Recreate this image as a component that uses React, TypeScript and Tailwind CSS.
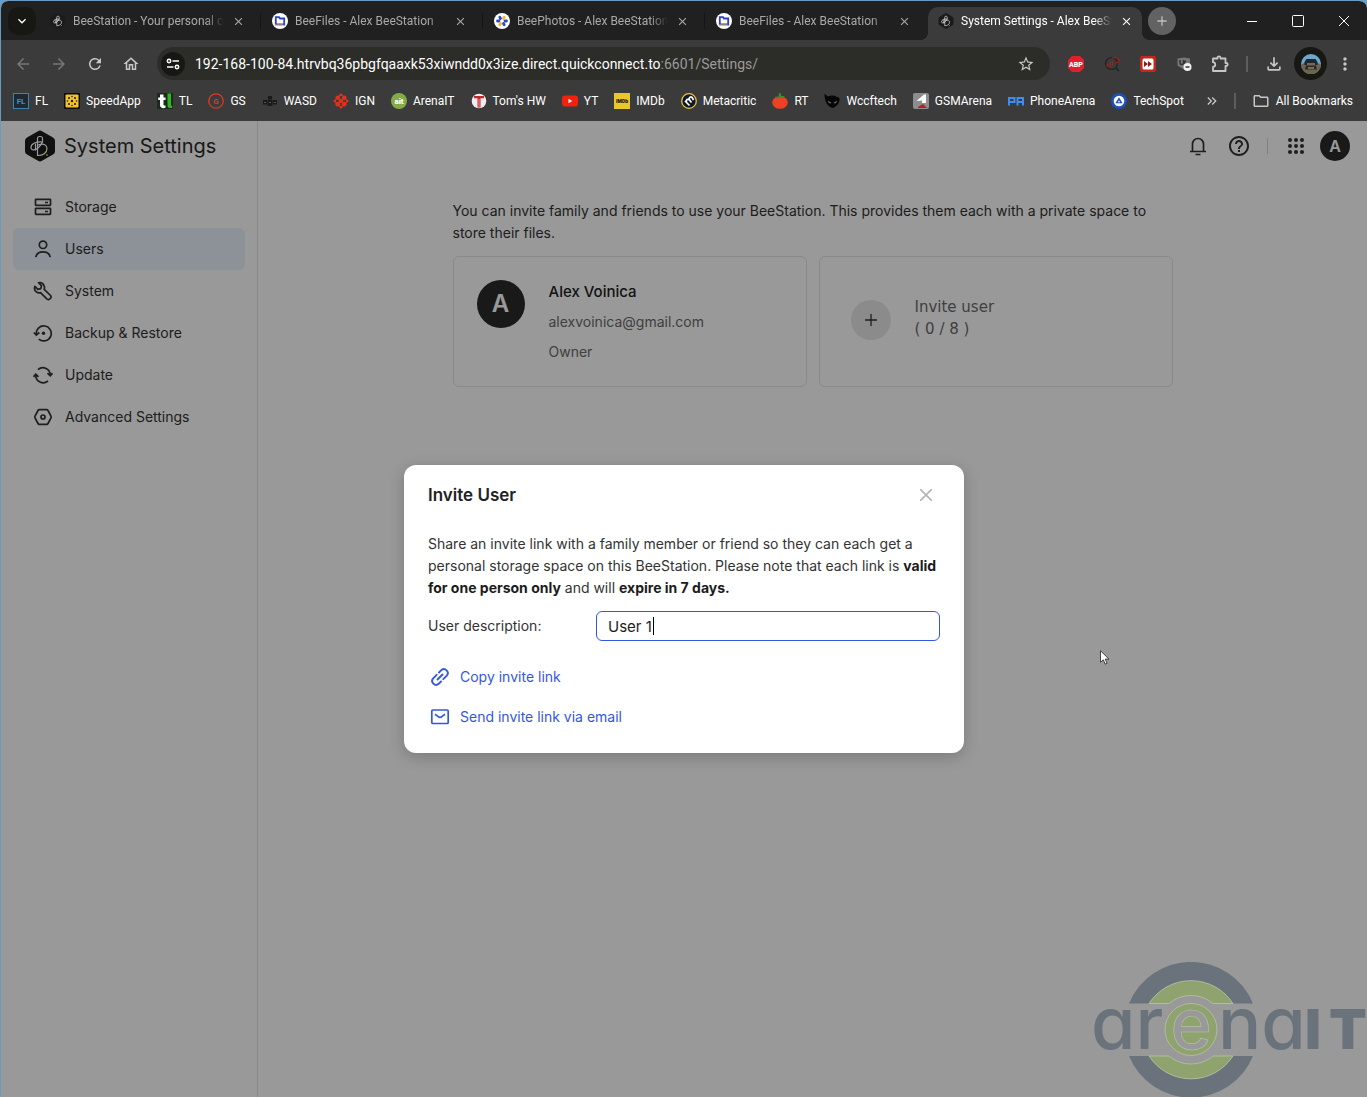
import type { ReactNode } from 'react';
import {
    MdAdd,
    MdArrowBack,
    MdArrowForward,
    MdClose,
    MdExpandMore,
    MdHelpOutline,
    MdKeyboardDoubleArrowRight,
    MdMoreVert,
    MdOutlineFileDownload,
    MdOutlineFolder,
    MdOutlineHome,
    MdRefresh,
    MdStarOutline,
} from 'react-icons/md';

const BeeLogo = ({ className }: { className: string }) => (
    <svg viewBox="0 0 30 32" className={className} aria-hidden="true">
        <path d="M13 1.2a4 4 0 0 1 4 0l11 6.2a4 4 0 0 1 2 3.5v10.2a4 4 0 0 1-2 3.500l-11 6.200a4 4 0 0 1-4 0l-11-6.200a4 4 0 0 1-2-3.500V10.900a4 4 0 0 1 2-3.500z" fill="#1b1b1b" />
        <g fill="none" stroke="#fff" strokeWidth="1.200">
            <path d="M12.500 12V8.500a2 2 0 0 1 2-2h1a2 2 0 0 1 2 2V12" />
            <path d="M12.500 11.500V25.500c5.500 0 9.500-2.500 9.500-7 0-3.500-3-5.500-9-3.500" />
            <path d="M17.500 12c-6-.500-11.500 1.500-11.500 5.500 0 3.500 4.500 3 7.500 0 2-2 3.500-4 4-5.500z" />
            <path d="M10.500 13.500v7" />
        </g>
        <circle cx="22" cy="25" r="0.900" fill="#f5b800" />
    </svg>
);

const FilesIcon = () => (
    <svg viewBox="0 0 16 16" className="size-4" aria-hidden="true">
        <circle cx="8" cy="8" r="8" fill="#fff" />
        <path d="M3.800 4.200h3.200l1 1.300h4.200v6H3.800z" fill="#fff" stroke="#2c3fc9" strokeWidth="1.800" />
        <path d="M3 12.300h8.500" stroke="#f0bd4b" strokeWidth="1.500" />
    </svg>
);

const PhotosIcon = () => (
    <svg viewBox="0 0 16 16" className="size-4" aria-hidden="true">
        <circle cx="8" cy="8" r="8" fill="#fff" />
        <g strokeWidth="2.800" strokeLinecap="round">
            <path d="M5.800 4.300l.7 1.200M10.200 11.700l-.7-1.200M3.500 8h1.500M11 8h1.500" stroke="#2f49c4" />
            <path d="M10.200 4.300l-.7 1.200M5.800 11.700l.7-1.200" stroke="#f2b632" />
        </g>
    </svg>
);

const tabs = [
    { title: 'BeeStation - Your personal cloud', icon: <BeeLogo className="size-4" /> },
    { title: 'BeeFiles - Alex BeeStation', icon: <FilesIcon /> },
    { title: 'BeePhotos - Alex BeeStation', icon: <PhotosIcon /> },
    { title: 'BeeFiles - Alex BeeStation', icon: <FilesIcon /> },
    { title: 'System Settings - Alex BeeStation', icon: <BeeLogo className="size-4" />, active: true },
];

const Fav = ({ children }: { children: ReactNode }) => (
    <svg viewBox="0 0 16 16" className="size-4 shrink-0" aria-hidden="true">
        {children}
    </svg>
);

const bookmarks = [
    {
        name: 'FL',
        icon: (
            <Fav>
                <rect x="0.500" y="0.500" width="15" height="15" fill="#1d2a33" stroke="#3d84b0" />
                <text x="8" y="11" fontSize="8" fontWeight="700" textAnchor="middle" fill="#3f93c9">FL</text>
            </Fav>
        ),
    },
    {
        name: 'SpeedApp',
        icon: (
            <Fav>
                <rect width="16" height="16" rx="1" fill="#0c0c0c" />
                <rect x="1.500" y="1.500" width="13" height="13" rx="1" fill="#f2c12e" />
                <g fill="#1a1a1a">
                    <circle cx="5" cy="5" r="1" /><circle cx="11" cy="5" r="1" />
                    <circle cx="3.500" cy="8" r="0.800" /><circle cx="12.500" cy="8" r="0.800" /><circle cx="8" cy="8" r="1.200" />
                    <circle cx="5" cy="11" r="1" /><circle cx="11" cy="11" r="1" />
                    <circle cx="8" cy="3.500" r="0.800" /><circle cx="8" cy="12.500" r="0.800" />
                </g>
            </Fav>
        ),
    },
    {
        name: 'TL',
        icon: (
            <Fav>
                <rect width="16" height="16" fill="#1c2a1c" />
                <path d="M3 1.500h3.500V4.500h2v2.500h-2v4.500c0 1 .8 1.200 2 1v2.300c-3 .9-5.500 0-5.500-2.800V7H1.200V4.500H3z" fill="#fff" />
                <path d="M10.500.500H14V11.500c0 1 .3 1.200 1.200 1.200V15c-3 .4-4.700-.3-4.700-3z" fill="#33b521" />
            </Fav>
        ),
    },
    {
        name: 'GS',
        icon: (
            <Fav>
                <circle cx="8" cy="8" r="7.200" fill="none" stroke="#dc3a22" strokeWidth="1.300" />
                <text x="8" y="11" fontSize="8" fontWeight="700" textAnchor="middle" fill="#dc3a22">G</text>
            </Fav>
        ),
    },
    {
        name: 'WASD',
        icon: (
            <Fav>
                <path d="M6 3h4v3H6zM1 7h4v4.500H1zM5.500 6.500h5V13h-5zM11 7h4v4.500h-4z" fill="#1a1a1a" />
                <path d="M7 9.500h2M2 9.500h2M12 9.500h2" stroke="#555" strokeWidth="1" />
            </Fav>
        ),
    },
    {
        name: 'IGN',
        icon: (
            <Fav>
                <g fill="#e0301e">
                    <path d="M8 0l2.500 3h-5zM8 16l2.500-3h-5zM0 8l3-2.500v5zM16 8l-3-2.500v5z" />
                    <circle cx="4.800" cy="4.800" r="2.400" /><circle cx="11.200" cy="4.800" r="2.400" />
                    <circle cx="4.800" cy="11.200" r="2.400" /><circle cx="11.200" cy="11.200" r="2.400" />
                    <circle cx="8" cy="8" r="2.300" />
                </g>
            </Fav>
        ),
    },
    {
        name: 'ArenaIT',
        icon: (
            <Fav>
                <circle cx="8" cy="8" r="8" fill="#85ab48" />
                <text x="8" y="11" fontSize="8" fontWeight="900" textAnchor="middle" fill="#fff">ait</text>
            </Fav>
        ),
    },
    {
        name: "Tom's HW",
        icon: (
            <Fav>
                <circle cx="8" cy="8" r="7.300" fill="#f0eeee" />
                <path d="M3 3h10v2.200H9.500V14.500h-3V5.200H3z" fill="#c4252a" />
                <path d="M8 6v8" stroke="#f0eeee" strokeWidth="0.600" />
            </Fav>
        ),
    },
    {
        name: 'YT',
        icon: (
            <Fav>
                <rect y="2.500" width="16" height="11" rx="3" fill="#f2220f" />
                <path d="M6.500 5.800v4.400l3.700-2.200z" fill="#fff" />
            </Fav>
        ),
    },
    {
        name: 'IMDb',
        icon: (
            <Fav>
                <rect width="16" height="16" fill="#eac52c" />
                <text x="8" y="10" fontSize="5" fontWeight="900" textAnchor="middle" fill="#111">IMDb</text>
            </Fav>
        ),
    },
    {
        name: 'Metacritic',
        icon: (
            <Fav>
                <circle cx="8" cy="8" r="7.300" fill="#0e1a2b" stroke="#f0c33c" strokeWidth="1.300" />
                <path d="M4 8l4.500 4.500M5.500 9.500c-1-3 1.500-4 3-2.500l2 2.500M8.500 7c-1-3 1.500-4 3-2l1 2" fill="none" stroke="#fff" strokeWidth="1.700" />
            </Fav>
        ),
    },
    {
        name: 'RT',
        icon: (
            <Fav>
                <ellipse cx="8" cy="9.500" rx="7.800" ry="6.300" fill="#ee4023" />
                <path d="M3 3.500l3.500.5L7 0l2 .5v2.500h4l-2.500 2L8 4.500 5 6z" fill="#2f8f3a" />
            </Fav>
        ),
    },
    {
        name: 'Wccftech',
        icon: (
            <Fav>
                <path d="M.5 1l3.500 2.500c3-1.500 6-1 8 0L15.500 5c.500 5-2.500 8-6.500 10C4 14 .5 9 .5 1z" fill="#050505" />
                <path d="M4 7.500l3.500 2.500c-2 1-3 0-3.500-2.500zM13 7.500L9.500 10c2 1 3 0 3.500-2.500z" fill="#6a6a6a" />
            </Fav>
        ),
    },
    {
        name: 'GSMArena',
        icon: (
            <Fav>
                <rect width="16" height="16" rx="2" fill="#8d8d8d" />
                <path d="M3.500 8L11 1.500h2V10H9V7.500z" fill="#fff" />
                <path d="M5 14l5-3 4 4H5z" fill="#b32020" />
            </Fav>
        ),
    },
    {
        name: 'PhoneArena',
        icon: (
            <Fav>
                <path d="M1 12.500V5h5.500v4H1M9.500 12.500V5H15v7.500M9.500 9H15" fill="none" stroke="#3f8df0" strokeWidth="2" />
            </Fav>
        ),
    },
    {
        name: 'TechSpot',
        icon: (
            <Fav>
                <circle cx="8" cy="8" r="8" fill="#1f4fb8" />
                <circle cx="8" cy="8" r="5.300" fill="#fff" />
                <path d="M8 4.200l3.600 6H4.400z" fill="#1f4fb8" />
                <path d="M8 7.200l1.200 2H6.800z" fill="#fff" />
            </Fav>
        ),
    },
];

const NavIcon = ({ children }: { children: ReactNode }) => (
    <svg viewBox="0 0 20 20" className="size-5 shrink-0" fill="none" stroke="currentColor" strokeWidth="1.700" aria-hidden="true">
        {children}
    </svg>
);

const navItems = [
    {
        name: 'Storage',
        icon: (
            <NavIcon>
                <rect x="2.500" y="2.300" width="15" height="6" rx="0.500" />
                <rect x="2.500" y="11.300" width="15" height="6" rx="0.500" />
                <path d="M12 5.500h3M12 14.500h3" />
            </NavIcon>
        ),
    },
    {
        name: 'Users',
        active: true,
        icon: (
            <NavIcon>
                <circle cx="10" cy="5.800" r="3.700" />
                <path d="M2.800 18.200c.6-3.400 3.400-5.400 7.200-5.400s6.600 2 7.200 5.400" />
            </NavIcon>
        ),
    },
    {
        name: 'System',
        icon: (
            <NavIcon>
                <path d="M5.500 1.700l3 3-.7 2.900-2.900.7-3-3C1 8 2 10.300 3.800 11.300c1.300.7 2.600.7 3.700.3l6.300 6.200c2.500 2 5.300-1 3.700-3.300l-6.300-6.200c.5-1.300.4-2.700-.3-4C9.900 2.300 7.900 1.100 5.500 1.700z" strokeLinejoin="round" />
            </NavIcon>
        ),
    },
    {
        name: 'Backup & Restore',
        icon: (
            <NavIcon>
                <path d="M3.300 11.500a7.500 7.500 0 1 1 2.500 4.600" />
                <path d="M.8 9.500l2.500 2.500 3-2.500" />
                <circle cx="10.500" cy="10.300" r="1.700" fill="currentColor" stroke="none" />
            </NavIcon>
        ),
    },
    {
        name: 'Update',
        icon: (
            <NavIcon>
                <path d="M5 4.700a7.300 7.300 0 0 1 12.200 5.800M15 15.800A7.300 7.300 0 0 1 2.800 10" />
                <path d="M14.500 8.200l2.700 2.500 2.300-2.500M.5 11.800l2.300-2.500 2.700 2.500" />
            </NavIcon>
        ),
    },
    {
        name: 'Advanced Settings',
        icon: (
            <NavIcon>
                <path d="M6.300 2.700h7.400a1.500 1.500 0 0 1 1.300.8l3 5.700a1.700 1.700 0 0 1 0 1.600l-3 5.700a1.500 1.500 0 0 1-1.300.8H6.300a1.500 1.500 0 0 1-1.300-.8l-3-5.700a1.700 1.700 0 0 1 0-1.600l3-5.700a1.500 1.500 0 0 1 1.300-.8z" />
                <circle cx="10" cy="10" r="2" />
            </NavIcon>
        ),
    },
];

function TabStrip() {
    return (
        <div className="flex h-[39px] items-end bg-[#202020]">
            <div className="flex h-[33px] min-w-0 flex-1 items-start pl-[7px]">
                <button aria-label="Search tabs" className="mr-1 flex size-7 shrink-0 items-center justify-center rounded-[10px] bg-[#171813] text-white">
                    <MdExpandMore className="size-4" />
                </button>
                {tabs.map((tab, i) => (
                    <div key={i} className="flex h-full min-w-0 items-start">
                        <div
                            className={`relative flex h-full w-[214px] min-w-0 items-start rounded-t-[10px] pt-1.5 pr-2 pl-2.5 ${
                                tab.active ? 'bg-[#3b3b3b] text-white' : 'text-[#a9a9a9]'
                            }`}
                        >
                            {tab.active && (
                                <>
                                    <span className="absolute bottom-0 -left-2 size-2 bg-[radial-gradient(circle_at_0_0,transparent_8px,#3b3b3b_8px)]" />
                                    <span className="absolute -right-2 bottom-0 size-2 bg-[radial-gradient(circle_at_100%_0,transparent_8px,#3b3b3b_8px)]" />
                                </>
                            )}
                            <span className="shrink-0">{tab.icon}</span>
                            <span className="ml-[7px] min-w-0 flex-1 overflow-hidden mask-r-from-88% text-xs whitespace-nowrap">{tab.title}</span>
                            <button aria-label="Close tab" className="ml-1.5 flex size-4 shrink-0 items-center justify-center">
                                <MdClose className="size-[13px]" />
                            </button>
                        </div>
                        {!tab.active && (
                            <span className="flex w-2 shrink-0 justify-end pt-1.5 pr-px">
                                {i < 3 && <span className="h-4 w-px bg-[#151515]" />}
                            </span>
                        )}
                    </div>
                ))}
                <button aria-label="New tab" className="ml-1.5 flex size-7 shrink-0 items-center justify-center rounded-full bg-[#626262] text-[#bdbdbd]">
                    <MdAdd className="size-4" />
                </button>
            </div>
            <div className="flex h-full shrink-0 text-white">
                <button aria-label="Minimize" className="flex w-[46px] items-center justify-center">
                    <svg viewBox="0 0 10 10" className="size-2.5" stroke="currentColor"><path d="M0 5.500h10" /></svg>
                </button>
                <button aria-label="Maximize" className="flex w-[46px] items-center justify-center">
                    <svg viewBox="0 0 12 12" className="size-3" fill="none" stroke="currentColor"><rect x="0.500" y="0.500" width="11" height="11" rx="1" /></svg>
                </button>
                <button aria-label="Close" className="flex w-[46px] items-center justify-center">
                    <svg viewBox="0 0 10 10" className="size-2.5" stroke="currentColor"><path d="M0 0l10 10M10 0L0 10" /></svg>
                </button>
            </div>
        </div>
    );
}

function Toolbar() {
    return (
        <div className="flex h-[41px] items-center bg-[#3b3b3b] pt-[6px] pr-2 pl-2 text-[#c7c7c7]">
            <div className="flex gap-2">
                <button aria-label="Back" className="flex size-7 items-center justify-center text-[#777]"><MdArrowBack className="size-[18px]" /></button>
                <button aria-label="Forward" className="flex size-7 items-center justify-center text-[#777]"><MdArrowForward className="size-[18px]" /></button>
                <button aria-label="Reload" className="flex size-7 items-center justify-center"><MdRefresh className="size-[18px]" /></button>
                <button aria-label="Home" className="flex size-7 items-center justify-center"><MdOutlineHome className="size-[18px]" /></button>
            </div>
            <div className="ml-3 flex h-[33px] min-w-0 flex-1 items-center rounded-full bg-[#2c2c28] px-1">
                <button aria-label="Site information" className="flex size-6 shrink-0 items-center justify-center rounded-full bg-[#171813] text-white">
                    <svg viewBox="0 0 14 14" className="size-3.5" fill="none" stroke="currentColor" strokeWidth="1.500">
                        <circle cx="3" cy="4" r="1.700" />
                        <path d="M6.500 4h6.500M1 10h6.500" />
                        <circle cx="11" cy="10" r="1.700" />
                    </svg>
                </button>
                <span className="ml-2.5 min-w-0 flex-1 truncate text-sm text-white">
                    192-168-100-84.htrvbq36pbgfqaaxk53xiwndd0x3ize.direct.quickconnect.to
                    <span className="text-[#9b9b9b]">:6601/Settings/</span>
                </span>
                <button aria-label="Bookmark this tab" className="mr-1 flex size-8 shrink-0 items-center justify-center"><MdStarOutline className="size-[18px]" /></button>
            </div>
            <div className="ml-3 flex shrink-0 items-center gap-2">
                <button aria-label="Adblock Plus" className="flex size-7 items-center justify-center">
                    <svg viewBox="0 0 18 16" className="h-4 w-[18px]">
                        <path d="M5 0h8l4 4v8l-4 4H5l-4-4V4z" fill="#e2202c" />
                        <text x="9" y="11" fontSize="7" fontWeight="900" textAnchor="middle" fill="#fff">ABP</text>
                    </svg>
                </button>
                <button aria-label="SEO tools" className="flex size-7 items-center justify-center">
                    <svg viewBox="0 0 16 16" className="size-4" fill="none">
                        <circle cx="7.500" cy="7.500" r="6" stroke="#222" strokeWidth="1.200" />
                        <path d="M12 12l3 3" stroke="#222" strokeWidth="1.500" />
                        <path d="M3.500 11V8M6 11V6M8.500 10V5M8 2c4-1 8 0 7 3-.5 1-2 2-3 2" stroke="#a32018" strokeWidth="1.200" />
                    </svg>
                </button>
                <button aria-label="Video speed" className="flex size-7 items-center justify-center">
                    <svg viewBox="0 0 16 16" className="size-4">
                        <rect width="16" height="16" rx="2" fill="#c5251d" />
                        <rect x="2.500" y="2.500" width="11" height="11" rx="1.500" fill="#fff" />
                        <path d="M4 5l4 3-4 3zM8 5l4 3-4 3z" fill="#8a1d18" />
                    </svg>
                </button>
                <button aria-label="uBlock" className="flex size-7 items-center justify-center">
                    <svg viewBox="0 0 16 16" className="size-4">
                        <path d="M1.500 2.500l6.500-1 6 1v6l-6 5-6.500-4z" fill="#777" />
                        <path d="M4 4v3c0 2 3.500 2 3.500 0V4M10 5a1.500 1.500 0 1 0 .1 3" fill="none" stroke="#333" strokeWidth="1.500" />
                        <circle cx="11.500" cy="11" r="4" fill="#f2f2f2" />
                        <path d="M9.500 11h4" stroke="#333" strokeWidth="1.500" />
                    </svg>
                </button>
                <button aria-label="Extensions" className="flex size-7 items-center justify-center">
                    <svg viewBox="0 0 18 18" className="size-[18px]" fill="none" stroke="currentColor" strokeWidth="1.800" strokeLinejoin="round">
                        <path d="M2 3.500h4.500V2.800a1.500 1.500 0 0 1 3 0v.700H14.500V8h.7a1.500 1.500 0 0 1 0 3h-.7v5H2v-4.200c3 0 3-4.600 0-4.600z" />
                    </svg>
                </button>
            </div>
            <span className="mx-3 h-4 w-[2px] shrink-0 bg-[#5d5d5d]" />
            <button aria-label="Downloads" className="flex size-7 shrink-0 items-center justify-center"><MdOutlineFileDownload className="size-5" /></button>
            <button aria-label="Profile" className="ml-1.5 flex size-[33px] shrink-0 items-center justify-center rounded-full bg-[#171813]">
                <svg viewBox="0 0 20 20" className="size-5">
                    <circle cx="10" cy="10" r="10" fill="#6fa6cf" />
                    <path d="M0 10.500l4-2h12l4 2a10 10 0 0 1-20 0z" fill="#6b6552" />
                    <path d="M3.500 8l2-3h9l2 3v3h-13z" fill="#20262b" />
                    <path d="M4 15.500l1-4h10l1 4z" fill="#2b2a26" />
                    <path d="M6 10h8M7 14h6" stroke="#c3b08a" strokeWidth="1.200" />
                </svg>
            </button>
            <button aria-label="Menu" className="ml-1 flex size-7 shrink-0 items-center justify-center"><MdMoreVert className="size-5" /></button>
        </div>
    );
}

function BookmarksBar() {
    return (
        <nav aria-label="Bookmarks" className="flex h-10 items-center bg-[#3b3b3b] pr-3.5 pl-3 text-xs text-white">
            <div className="flex min-w-0 flex-1 items-center gap-4 overflow-hidden">
                {bookmarks.map((b) => (
                    <a key={b.name} href="#" className="flex shrink-0 items-center gap-1.5 whitespace-nowrap">
                        {b.icon}
                        {b.name}
                    </a>
                ))}
            </div>
            <button aria-label="More bookmarks" className="flex size-4 shrink-0 items-center justify-center text-[#c7c7c7]"><MdKeyboardDoubleArrowRight className="size-4" /></button>
            <span className="mr-4 ml-3.5 h-4 w-[2px] shrink-0 bg-[#5d5d5d]" />
            <a href="#" className="flex shrink-0 items-center gap-1.5">
                <MdOutlineFolder className="size-[18px] text-[#c7c7c7]" />
                All Bookmarks
            </a>
        </nav>
    );
}

function Sidebar() {
    return (
        <aside className="w-[257px] shrink-0 border-r border-[#e4e4e4] px-3">
            <div className="mb-[15px] flex h-[50px] items-center gap-[9px] pl-3">
                <BeeLogo className="h-8 w-[30px]" />
                <h1 className="text-xl text-[#2b2b2b]">System Settings</h1>
            </div>
            <nav aria-label="Settings">
                {navItems.map((item) => (
                    <a
                        key={item.name}
                        href="#"
                        className={`flex h-[42px] items-center gap-3 rounded-md pl-5 ${item.active ? 'bg-[#ebf3ff]' : ''}`}
                    >
                        {item.icon}
                        {item.name}
                    </a>
                ))}
            </nav>
        </aside>
    );
}

function Content() {
    return (
        <main className="min-w-0 flex-1">
            <div className="flex h-[50px] items-center justify-end pr-[17px]">
                <button aria-label="Notifications" className="mr-[17px]">
                    <svg viewBox="0 0 24 24" className="size-6" fill="none" stroke="currentColor" strokeWidth="1.700">
                        <path d="M6.500 17.500V10a5.500 5.500 0 0 1 11 0v7.500" />
                        <path d="M4 17.500h16M9.500 20.500h5" />
                    </svg>
                </button>
                <button aria-label="Help"><MdHelpOutline className="size-6" /></button>
                <span className="mx-4 h-4 w-px bg-[#d8d8d8]" />
                <button aria-label="Apps" className="mr-3">
                    <svg viewBox="0 0 24 24" className="size-6" fill="currentColor">
                        <circle cx="6" cy="6" r="2" /><circle cx="12" cy="6" r="2" /><circle cx="18" cy="6" r="2" />
                        <circle cx="6" cy="12" r="2" /><circle cx="12" cy="12" r="2" /><circle cx="18" cy="12" r="2" />
                        <circle cx="6" cy="18" r="2" /><circle cx="12" cy="18" r="2" /><circle cx="18" cy="18" r="2" />
                    </svg>
                </button>
                <button aria-label="Account" className="size-[30px] rounded-full bg-[#2b2b2b] text-base font-semibold text-white">A</button>
            </div>
            <div className="mx-auto max-w-[720px] pt-[29px]">
                <p>You can invite family and friends to use your BeeStation. This provides them each with a private space to store their files.</p>
                <div className="mt-3 grid grid-cols-2 gap-3">
                    <section className="flex h-[131px] gap-6 rounded-md border border-[#e4e4e4] p-[23px]">
                        <span className="flex size-12 shrink-0 items-center justify-center rounded-full bg-[#2b2b2b] text-2xl font-semibold text-white">A</span>
                        <div className="flex flex-col gap-2 pt-px text-[#6b6b6b]">
                            <h2 className="text-[15px] leading-[22px] font-medium text-[#222]">Alex Voinica</h2>
                            <p>alexvoinica@gmail.com</p>
                            <p>Owner</p>
                        </div>
                    </section>
                    <button className="flex h-[131px] items-center gap-6 rounded-md border border-[#e4e4e4] px-[31px] pb-1 text-left">
                        <span className="flex size-10 shrink-0 items-center justify-center rounded-full bg-[#e8e8e8]">
                            <svg viewBox="0 0 12 12" className="size-3" stroke="currentColor" strokeWidth="1.300"><path d="M0 6h12M6 0v12" /></svg>
                        </span>
                        <span className="pb-1 font-[Verdana,'DejaVu_Sans',sans-serif] text-[15px] leading-[22px] text-[#6b6b6b]">
                            Invite user
                            <br />( 0 / 8 )
                        </span>
                    </button>
                </div>
            </div>
        </main>
    );
}

function InviteDialog() {
    return (
        <div role="dialog" aria-labelledby="invite-title" className="w-[560px] rounded-xl bg-white px-6 pb-[26px] text-[#333] shadow-[0_4px_16px_rgba(0,0,0,0.2)]">
            <div className="flex h-[60px] items-center justify-between">
                <h2 id="invite-title" className="text-[17px] font-semibold text-[#222]">Invite User</h2>
                <button aria-label="Close" className="flex size-7 items-center justify-center text-[#b5b5b5]">
                    <svg viewBox="0 0 12 12" className="size-3" stroke="currentColor" strokeWidth="1.700"><path d="M0 0l12 12M12 0L0 12" /></svg>
                </button>
            </div>
            <p className="pt-2">
                Share an invite link with a family member or friend so they can each get a personal storage space on this
                BeeStation. Please note that each link is <b className="text-[#1c1c1c]">valid for one person only</b> and will{' '}
                <b className="text-[#1c1c1c]">expire in 7 days.</b>
            </p>
            <div className="mt-3 flex items-center">
                <label htmlFor="description" className="w-[168px] shrink-0">User description:</label>
                <div className="relative flex-1">
                    <input id="description" defaultValue="User 1" className="block h-[30px] w-full rounded-md border border-[#3557dd] px-[11px] text-[15px] text-[#1c1c1c] outline-none" />
                    <span className="absolute top-1.5 left-[57px] h-[18px] w-px bg-black" />
                </div>
            </div>
            <div className="mt-[26px] flex flex-col items-start gap-5 text-[#3557dd]">
                <button className="flex h-5 items-center gap-2.5 pl-0.5">
                    <svg viewBox="0 0 20 20" className="size-5" fill="none" stroke="currentColor" strokeWidth="1.900" strokeLinecap="round">
                        <path d="M9 5.500l2.300-2.300a3.900 3.900 0 0 1 5.500 5.500l-3.500 3.500" />
                        <path d="M11 14.500l-2.300 2.300a3.900 3.900 0 0 1-5.500-5.500l3.500-3.500" />
                        <path d="M7.500 12.500l5-5" />
                    </svg>
                    Copy invite link
                </button>
                <button className="flex h-5 items-center gap-2.5 pl-0.5">
                    <svg viewBox="0 0 20 20" className="size-5" fill="none" stroke="currentColor" strokeWidth="1.700">
                        <rect x="1.800" y="3" width="16.400" height="13.500" rx="1" />
                        <path d="M5 7.200l3.200 2.400a3 3 0 0 0 3.600 0L15 7.200" />
                    </svg>
                    Send invite link via email
                </button>
            </div>
        </div>
    );
}

const Watermark = () => (
    <svg viewBox="0 0 275 135" className="absolute right-0 bottom-0 h-[135px] w-[275px]" fontFamily="Inter, sans-serif" style={{ fontFeatureSettings: '"cv11"' }}>
        <g fill="#6a737b">
            <path d="M37 41.500a67 67 0 0 1 124 0h-20a50 50 0 0 0-84 0z" />
            <path d="M37 94a67 67 0 0 0 124 0h-20a50 50 0 0 1-84 0z" />
        </g>
        <g fill="#8fa36f" stroke="#b9c1a9" strokeWidth="0.800">
            <path d="M57 41.500a50 50 0 0 1 84 0h-20a34 34 0 0 0-44 0z" />
            <path d="M57 94a50 50 0 0 0 84 0h-20a34 34 0 0 1-44 0z" />
            <circle cx="99" cy="67.500" r="26" />
        </g>
        <g fill="#6a737b" fontSize="72" fontWeight="500">
            <text x="-1" y="87">ar</text>
            <text x="126" y="87">na</text>
            <text x="99" y="87" fontSize="70" textAnchor="middle" fill="#999" stroke="#b9c1a9" strokeWidth="0.600">e</text>
            <text x="213" y="87" fontSize="55" fontWeight="900">I</text>
            <text x="237" y="87" fontSize="55" fontWeight="900">T</text>
        </g>
    </svg>
);

export default function App() {
    return (
        <div className="bg-[#68a0cc]">
            <div className="flex min-h-screen flex-col overflow-hidden rounded-t-lg border-t border-l border-[#6b9ac0] bg-white font-[Roboto,'Segoe_UI',sans-serif]">
                <header>
                    <TabStrip />
                    <Toolbar />
                    <BookmarksBar />
                </header>
                <div className="relative flex flex-1 font-[Inter,sans-serif] text-sm leading-[22px] text-[#333]">
                    <Sidebar />
                    <Content />
                    <div className="absolute inset-0 flex items-center justify-center bg-black/40">
                        <InviteDialog />
                        <svg viewBox="0 0 10 15" className="absolute top-[529px] right-[257px] h-[15px] w-2.5" aria-hidden="true">
                            <path d="M.5.800v11.500l2.800-2.500 1.900 4.300 1.900-.8-1.900-4.200h3.800z" fill="#fff" stroke="#222" strokeWidth="0.800" />
                        </svg>
                        <Watermark />
                    </div>
                </div>
            </div>
        </div>
    );
}
